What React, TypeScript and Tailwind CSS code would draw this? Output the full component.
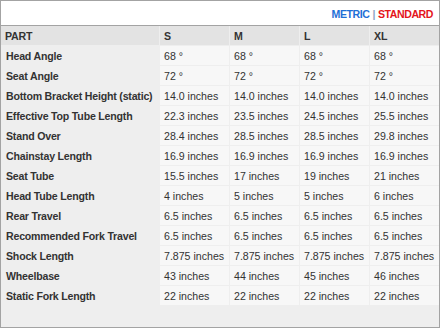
import React from 'react';

const SIZES = ['S', 'M', 'L', 'XL'];

const ROWS: [string, string[]][] = [
  ['Head Angle', ['68 °', '68 °', '68 °', '68 °']],
  ['Seat Angle', ['72 °', '72 °', '72 °', '72 °']],
  ['Bottom Bracket Height (static)', ['14.0 inches', '14.0 inches', '14.0 inches', '14.0 inches']],
  ['Effective Top Tube Length', ['22.3 inches', '23.5 inches', '24.5 inches', '25.5 inches']],
  ['Stand Over', ['28.4 inches', '28.5 inches', '28.5 inches', '29.8 inches']],
  ['Chainstay Length', ['16.9 inches', '16.9 inches', '16.9 inches', '16.9 inches']],
  ['Seat Tube', ['15.5 inches', '17 inches', '19 inches', '21 inches']],
  ['Head Tube Length', ['4 inches', '5 inches', '5 inches', '6 inches']],
  ['Rear Travel', ['6.5 inches', '6.5 inches', '6.5 inches', '6.5 inches']],
  ['Recommended Fork Travel', ['6.5 inches', '6.5 inches', '6.5 inches', '6.5 inches']],
  ['Shock Length', ['7.875 inches', '7.875 inches', '7.875 inches', '7.875 inches']],
  ['Wheelbase', ['43 inches', '44 inches', '45 inches', '46 inches']],
  ['Static Fork Length', ['22 inches', '22 inches', '22 inches', '22 inches']],
];

export default function App() {
  return (
    <div
      className="w-[440px] h-[328px] border border-[#a3a3a3] bg-[#eeeeee] flex flex-col text-[10.6px] text-[#333333]"
      style={{ fontFamily: '"Liberation Sans", Arial, sans-serif' }}
    >
      {/* unit switch */}
      <div className="h-[25px] shrink-0 bg-white border-b border-[#a3a3a3] flex items-center justify-end pr-[6px] pt-[3px] font-bold tracking-[-0.45px]">
        <span className="text-[#1f6fd6]">METRIC</span>
        <span className="text-[#8aa4c4] mx-[3px]">|</span>
        <span className="text-[#e4141b]">STANDARD</span>
      </div>

      {/* geometry table */}
      <div className="grid grid-cols-[158px_69px_69px_69px_69px] gap-px auto-rows-[19px] pb-[1px]">
        <div className="bg-[#e3e3e3] font-bold tracking-[-0.2px] pl-[4px] pt-[2px] flex items-center">PART</div>
        {SIZES.map((s) => (
          <div key={s} className="bg-[#e3e3e3] font-bold pl-[4px] pt-[2px] flex items-center">
            {s}
          </div>
        ))}
        {ROWS.map(([label, vals]) => (
          <React.Fragment key={label}>
            <div className="bg-[#eeeeee] font-bold tracking-[-0.2px] pl-[5px] pt-[2px] flex items-center whitespace-nowrap">
              {label}
            </div>
            {vals.map((v, i) => (
              <div key={i} className="bg-[#f7f7f7] pl-[4px] pt-[2px] flex items-center whitespace-nowrap">
                {v}
              </div>
            ))}
          </React.Fragment>
        ))}
      </div>
    </div>
  );
}
